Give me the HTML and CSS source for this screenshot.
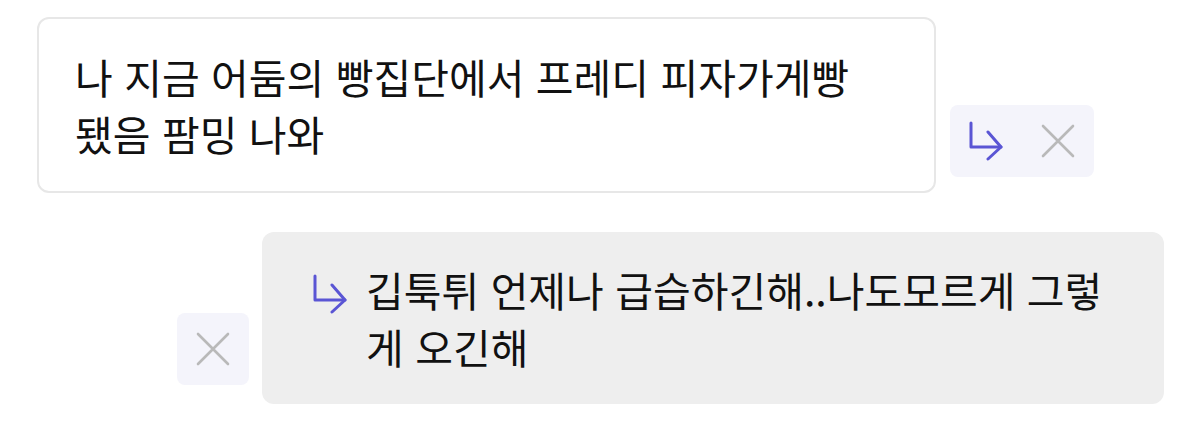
FILE: index.html
```html
<!DOCTYPE html>
<html lang="ko">
<head>
    <meta charset="UTF-8">
    <meta name="viewport" content="width=device-width, initial-scale=1.0">
    <title>답장</title>
    <link rel="stylesheet" href="styles.css">
</head>
<body>
    <div class="chat">
        <div class="row incoming">
            <div class="bubble">나 지금 어둠의 빵집단에서 프레디 피자가게빵 됐음 팜밍 나와</div>
            <div class="actions">
                <button class="icon-btn reply" title="답장">
                    <svg width="36" height="40" viewBox="0 0 36 40" fill="none" stroke="currentColor" stroke-width="3" stroke-linecap="round" stroke-linejoin="round">
                        <path d="M3 2 V26 H33"/>
                        <path d="M20 11 L33 26 L20 38"/>
                    </svg>
                </button>
                <button class="icon-btn close" title="닫기">
                    <svg width="34" height="34" viewBox="0 0 34 34" fill="none" stroke="currentColor" stroke-width="2.6" stroke-linecap="round">
                        <path d="M2 2 L32 32 M32 2 L2 32"/>
                    </svg>
                </button>
            </div>
        </div>

        <div class="row outgoing">
            <div class="actions">
                <button class="icon-btn close" title="닫기">
                    <svg width="34" height="34" viewBox="0 0 34 34" fill="none" stroke="currentColor" stroke-width="2.6" stroke-linecap="round">
                        <path d="M2 2 L32 32 M32 2 L2 32"/>
                    </svg>
                </button>
            </div>
            <div class="bubble quoted">
                <span class="quote-mark">
                    <svg width="36" height="40" viewBox="0 0 36 40" fill="none" stroke="currentColor" stroke-width="3" stroke-linecap="round" stroke-linejoin="round">
                        <path d="M3 2 V26 H33"/>
                        <path d="M20 11 L33 26 L20 38"/>
                    </svg>
                </span>
                <p class="quote-text">깁툭튀 언제나 급습하긴해..나도모르게 그렇게 오긴해</p>
            </div>
        </div>
    </div>
</body>
</html>
```

FILE: styles.css
```css
body {
    margin: 0;
    background: #ffffff;
    font-family: "Noto Sans CJK KR", "Noto Sans", sans-serif;
    color: #111111;
}
.chat {
    display: flex;
    flex-direction: column;
    gap: 39px;
    padding: 17px 36px 0 37px;
}
.row {
    display: flex;
    align-items: flex-end;
}
.incoming {
    gap: 14px;
}
.incoming .actions {
    margin-bottom: 16px;
}
.outgoing {
    justify-content: flex-end;
    gap: 13px;
}
.outgoing .actions {
    margin-bottom: 19px;
}
.bubble {
    box-sizing: border-box;
    width: 899px;
    padding: 29px 50px 29px 36px;
    background: #ffffff;
    border: 2px solid #e7e7e7;
    border-radius: 12px;
    font-size: 41px;
    line-height: 57px;
}
.quoted {
    width: 902px;
    display: flex;
    align-items: flex-start;
    gap: 18px;
    padding: 29px 36px 29px 50px;
    background: #eeeeee;
    border: none;
}
.quote-mark {
    color: #5a55d4;
    display: flex;
    margin-top: 13px;
}
.quote-text {
    margin: 0;
    flex: 1;
}
.actions {
    display: flex;
    background: #f4f4fb;
    border-radius: 8px;
}
.icon-btn {
    width: 72px;
    height: 72px;
    display: flex;
    align-items: center;
    justify-content: center;
    padding: 0;
    border: none;
    background: none;
    cursor: pointer;
}
.reply {
    color: #5a55d4;
}
.close {
    color: #b9b9b9;
}
```
